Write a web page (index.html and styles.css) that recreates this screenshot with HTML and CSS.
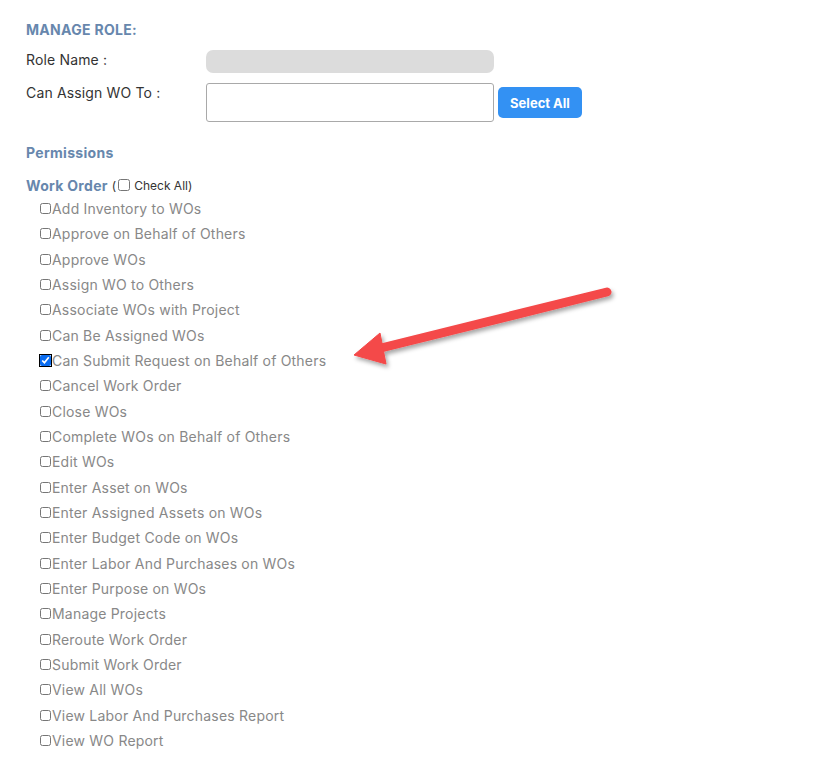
FILE: index.html
```html
<!DOCTYPE html>
<html lang="en">
<head>
    <meta charset="UTF-8">
    <meta name="viewport" content="width=device-width, initial-scale=1.0">
    <title>Manage Role</title>
    <link rel="stylesheet" href="styles.css">
</head>
<body>
    <div class="page">
        <h2 class="section-title">MANAGE ROLE:</h2>

        <div class="form-row row-name">
            <label class="form-label">Role Name :</label>
            <div class="role-name"></div>
        </div>

        <div class="form-row row-assign">
            <label class="form-label">Can Assign WO To :</label>
            <div class="assign-box"></div>
            <button class="select-all">Select All</button>
        </div>

        <h3 class="section-title permissions">Permissions</h3>

        <div class="group-head">
            <span class="group-name">Work Order</span>
            <span class="check-all">(<input type="checkbox" class="cb-small"> Check All)</span>
        </div>

        <ul class="perm-list">
            <li><input type="checkbox">Add Inventory to WOs</li>
            <li><input type="checkbox">Approve on Behalf of Others</li>
            <li><input type="checkbox">Approve WOs</li>
            <li><input type="checkbox">Assign WO to Others</li>
            <li><input type="checkbox">Associate WOs with Project</li>
            <li><input type="checkbox">Can Be Assigned WOs</li>
            <li><input type="checkbox" class="focused" checked>Can Submit Request on Behalf of Others</li>
            <li><input type="checkbox">Cancel Work Order</li>
            <li><input type="checkbox">Close WOs</li>
            <li><input type="checkbox">Complete WOs on Behalf of Others</li>
            <li><input type="checkbox">Edit WOs</li>
            <li><input type="checkbox">Enter Asset on WOs</li>
            <li><input type="checkbox">Enter Assigned Assets on WOs</li>
            <li><input type="checkbox">Enter Budget Code on WOs</li>
            <li><input type="checkbox">Enter Labor And Purchases on WOs</li>
            <li><input type="checkbox">Enter Purpose on WOs</li>
            <li><input type="checkbox">Manage Projects</li>
            <li><input type="checkbox">Reroute Work Order</li>
            <li><input type="checkbox">Submit Work Order</li>
            <li><input type="checkbox">View All WOs</li>
            <li><input type="checkbox">View Labor And Purchases Report</li>
            <li><input type="checkbox">View WO Report</li>
        </ul>

        <!-- annotation arrow pointing at the checked permission -->
        <svg class="arrow" viewBox="0 0 280 90" width="280" height="90">
            <defs>
                <filter id="arrow-shadow" x="-10%" y="-30%" width="130%" height="180%">
                    <feDropShadow dx="2" dy="3" stdDeviation="2" flood-color="#000" flood-opacity="0.35"></feDropShadow>
                </filter>
            </defs>
            <g filter="url(#arrow-shadow)" fill="#f44848" stroke="#f44848">
                <line x1="262" y1="12" x2="36" y2="68" stroke-width="9" stroke-linecap="round"></line>
                <polygon points="9,75 35,53 41,84" stroke-width="1" stroke-linejoin="round"></polygon>
            </g>
        </svg>
    </div>
</body>
</html>
```

FILE: styles.css
```css
* {
  margin: 0;
  padding: 0;
  box-sizing: border-box;
}

body {
  font-family: 'Inter', 'Liberation Sans', sans-serif;
  background-color: #fff;
  color: #333;
}

.page {
  position: relative;
  padding: 22px 0 0 26px;
}

.section-title {
  font-size: 14px;
  font-weight: 700;
  color: #6787ad;
  line-height: 16px;
  letter-spacing: 0.3px;
}

.form-row {
  display: flex;
  align-items: flex-start;
}

.row-name {
  margin-top: 12px;
}

.row-assign {
  margin-top: 10px;
}

.form-label {
  width: 180px;
  font-size: 14px;
  line-height: 16px;
  color: #333;
  letter-spacing: 0.15px;
}

.row-name .form-label {
  padding-top: 2px;
}

.row-assign .form-label {
  padding-top: 2px;
}

.role-name {
  width: 288px;
  height: 23px;
  background-color: #dcdcdc;
  border-radius: 7px;
}

.assign-box {
  width: 288px;
  height: 39px;
  border: 1px solid #a9a9a9;
  border-radius: 3px;
  background-color: #fff;
}

.select-all {
  margin: 4px 0 0 4px;
  width: 84px;
  height: 31px;
  border: none;
  border-radius: 5px;
  background-color: #3391f3;
  color: #fff;
  font-family: 'Inter', 'Liberation Sans', sans-serif;
  font-size: 13px;
  font-weight: 700;
  cursor: pointer;
}

.permissions {
  margin-top: 23px;
}

.group-head {
  margin-top: 16px;
  display: flex;
  align-items: center;
  height: 16px;
}

.group-name {
  font-size: 14px;
  font-weight: 700;
  color: #6787ad;
  letter-spacing: 0.3px;
}

.check-all {
  margin-left: 4px;
  font-size: 12px;
  color: #333;
  display: flex;
  align-items: center;
}

.check-all .cb-small {
  width: 12px;
  height: 12px;
  margin: 0 4px 0 2px;
}

.perm-list {
  list-style: none;
  margin-top: 3px;
  padding-left: 14px;
}

.perm-list li {
  display: flex;
  align-items: center;
  height: 25.33px;
  font-size: 14px;
  color: #888;
  letter-spacing: 0.2px;
}

.perm-list input {
  width: 11px;
  height: 11px;
  margin: 0 1px 0 0;
  accent-color: #0a6cf0;
}

.perm-list input.focused {
  outline: 1.5px solid #000;
  outline-offset: 0;
  border-radius: 3px;
}

.arrow {
  position: absolute;
  left: 345px;
  top: 280px;
  overflow: visible;
}
```
